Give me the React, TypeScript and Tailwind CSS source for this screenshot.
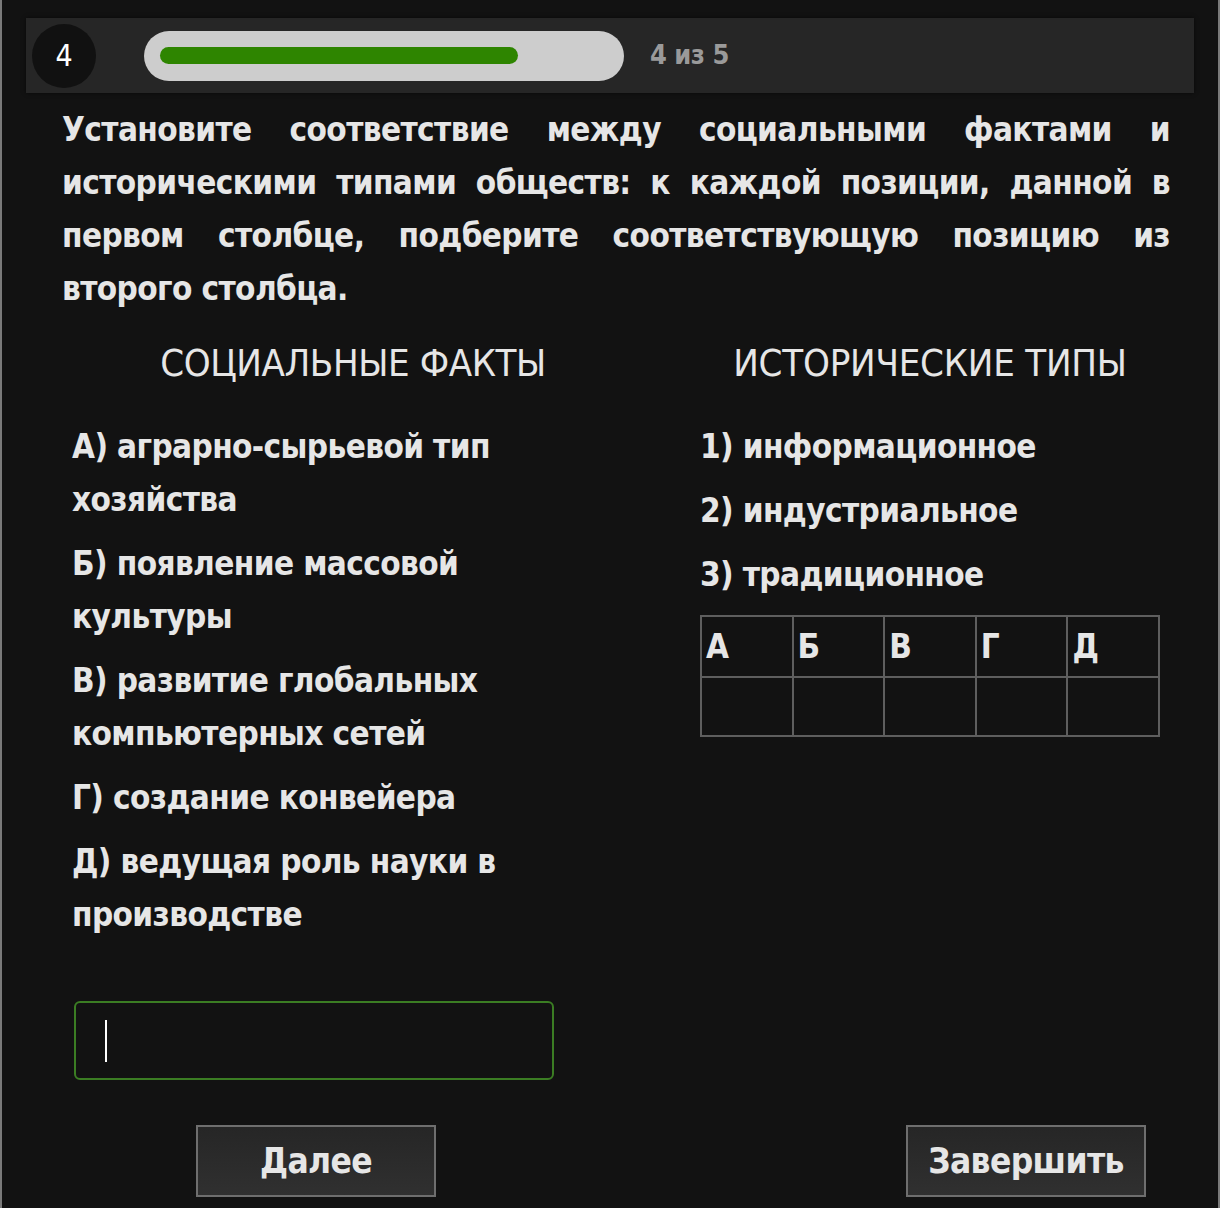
import React from 'react';

const facts = [
  'А) аграрно-сырьевой тип хозяйства',
  'Б) появление массовой культуры',
  'В) развитие глобальных компьютерных сетей',
  'Г) создание конвейера',
  'Д) ведущая роль науки в производстве',
];

const types = ['1) информационное', '2) индустриальное', '3) традиционное'];

const letters = ['А', 'Б', 'В', 'Г', 'Д'];

const font = { fontFamily: '"DejaVu Sans Condensed", "DejaVu Sans", sans-serif' };

const App: React.FC = () => {
  return (
    <div
      className="min-h-[1208px] bg-[#121212] border-x-2 border-[#7a7a7a] text-[#e6e6e6] pt-[18px]"
      style={font}
    >
      {/* top bar */}
      <div className="mx-[24px] h-[75px] bg-[#262626] shadow-[0_0_4px_rgba(0,0,0,0.6)] flex items-center px-[6px]">
        <div className="w-16 h-16 rounded-full bg-[#111] flex items-center justify-center text-[30px] text-white">
          4
        </div>
        <div className="ml-12 w-[480px] h-[50px] rounded-full bg-[#cdcdcd] flex items-center px-4">
          <div className="w-[358px] h-[17px] rounded-full bg-[#2e8500]" />
        </div>
        <div className="ml-[26px] text-[27px] tracking-[-0.5px] text-[#9a9a9a] font-bold">4 из 5</div>
      </div>

      {/* question */}
      <p className="mt-[10px] pl-[60px] pr-[48px] text-[33px] tracking-[-0.6px] leading-[53px] font-bold text-justify">
        Установите соответствие между социальными фактами и историческими типами обществ: к каждой позиции, данной в первом столбце, подберите соответствующую позицию из второго столбца.
      </p>

      <div className="mt-[24px] ml-[60px] grid grid-cols-[582px_460px] gap-x-[56px]">
        {/* left column */}
        <div>
          <h3 className="text-center text-[38px] tracking-[-0.4px] leading-[48px]">СОЦИАЛЬНЫЕ ФАКТЫ</h3>
          <ul className="mt-[33px] pl-[10px] w-[560px] flex flex-col gap-[11px]">
            {facts.map((f) => (
              <li key={f} className="text-[33px] tracking-[-0.6px] leading-[53px] font-bold">
                {f}
              </li>
            ))}
          </ul>
          <div className="mt-[60px] ml-[12px] w-[480px] h-[79px] border-2 border-[#3b7d23] rounded-md flex items-center pl-[29px]">
            <span className="w-[2px] h-[42px] bg-white" />
          </div>
        </div>

        {/* right column */}
        <div>
          <h3 className="text-center text-[38px] tracking-[-0.2px] leading-[48px]">ИСТОРИЧЕСКИЕ ТИПЫ</h3>
          <ul className="mt-[33px] flex flex-col gap-[11px]">
            {types.map((t) => (
              <li key={t} className="text-[33px] tracking-[-0.6px] leading-[53px] font-bold">
                {t}
              </li>
            ))}
          </ul>
          <table className="mt-[14px] w-[460px] border-collapse table-fixed">
            <tbody>
              <tr className="h-[61px]">
                {letters.map((l) => (
                  <td key={l} className="border-2 border-[#5e5e5e] px-[4px] text-[33px] font-bold align-middle">
                    {l}
                  </td>
                ))}
              </tr>
              <tr className="h-[59px]">
                {letters.map((l) => (
                  <td key={l} className="border-2 border-[#5e5e5e]" />
                ))}
              </tr>
            </tbody>
          </table>
        </div>
      </div>

      {/* buttons */}
      <div className="mt-[45px] ml-[194px] flex gap-[470px]">
        <button className="w-[240px] h-[72px] bg-gradient-to-b from-[#262626] to-[#303030] border-2 border-[#6e6e6e] text-[35px] tracking-[-0.6px] font-bold text-[#e6e6e6]">
          Далее
        </button>
        <button className="w-[240px] h-[72px] bg-gradient-to-b from-[#262626] to-[#303030] border-2 border-[#6e6e6e] text-[35px] tracking-[-0.6px] font-bold text-[#e6e6e6]">
          Завершить
        </button>
      </div>
    </div>
  );
};

export default App;
